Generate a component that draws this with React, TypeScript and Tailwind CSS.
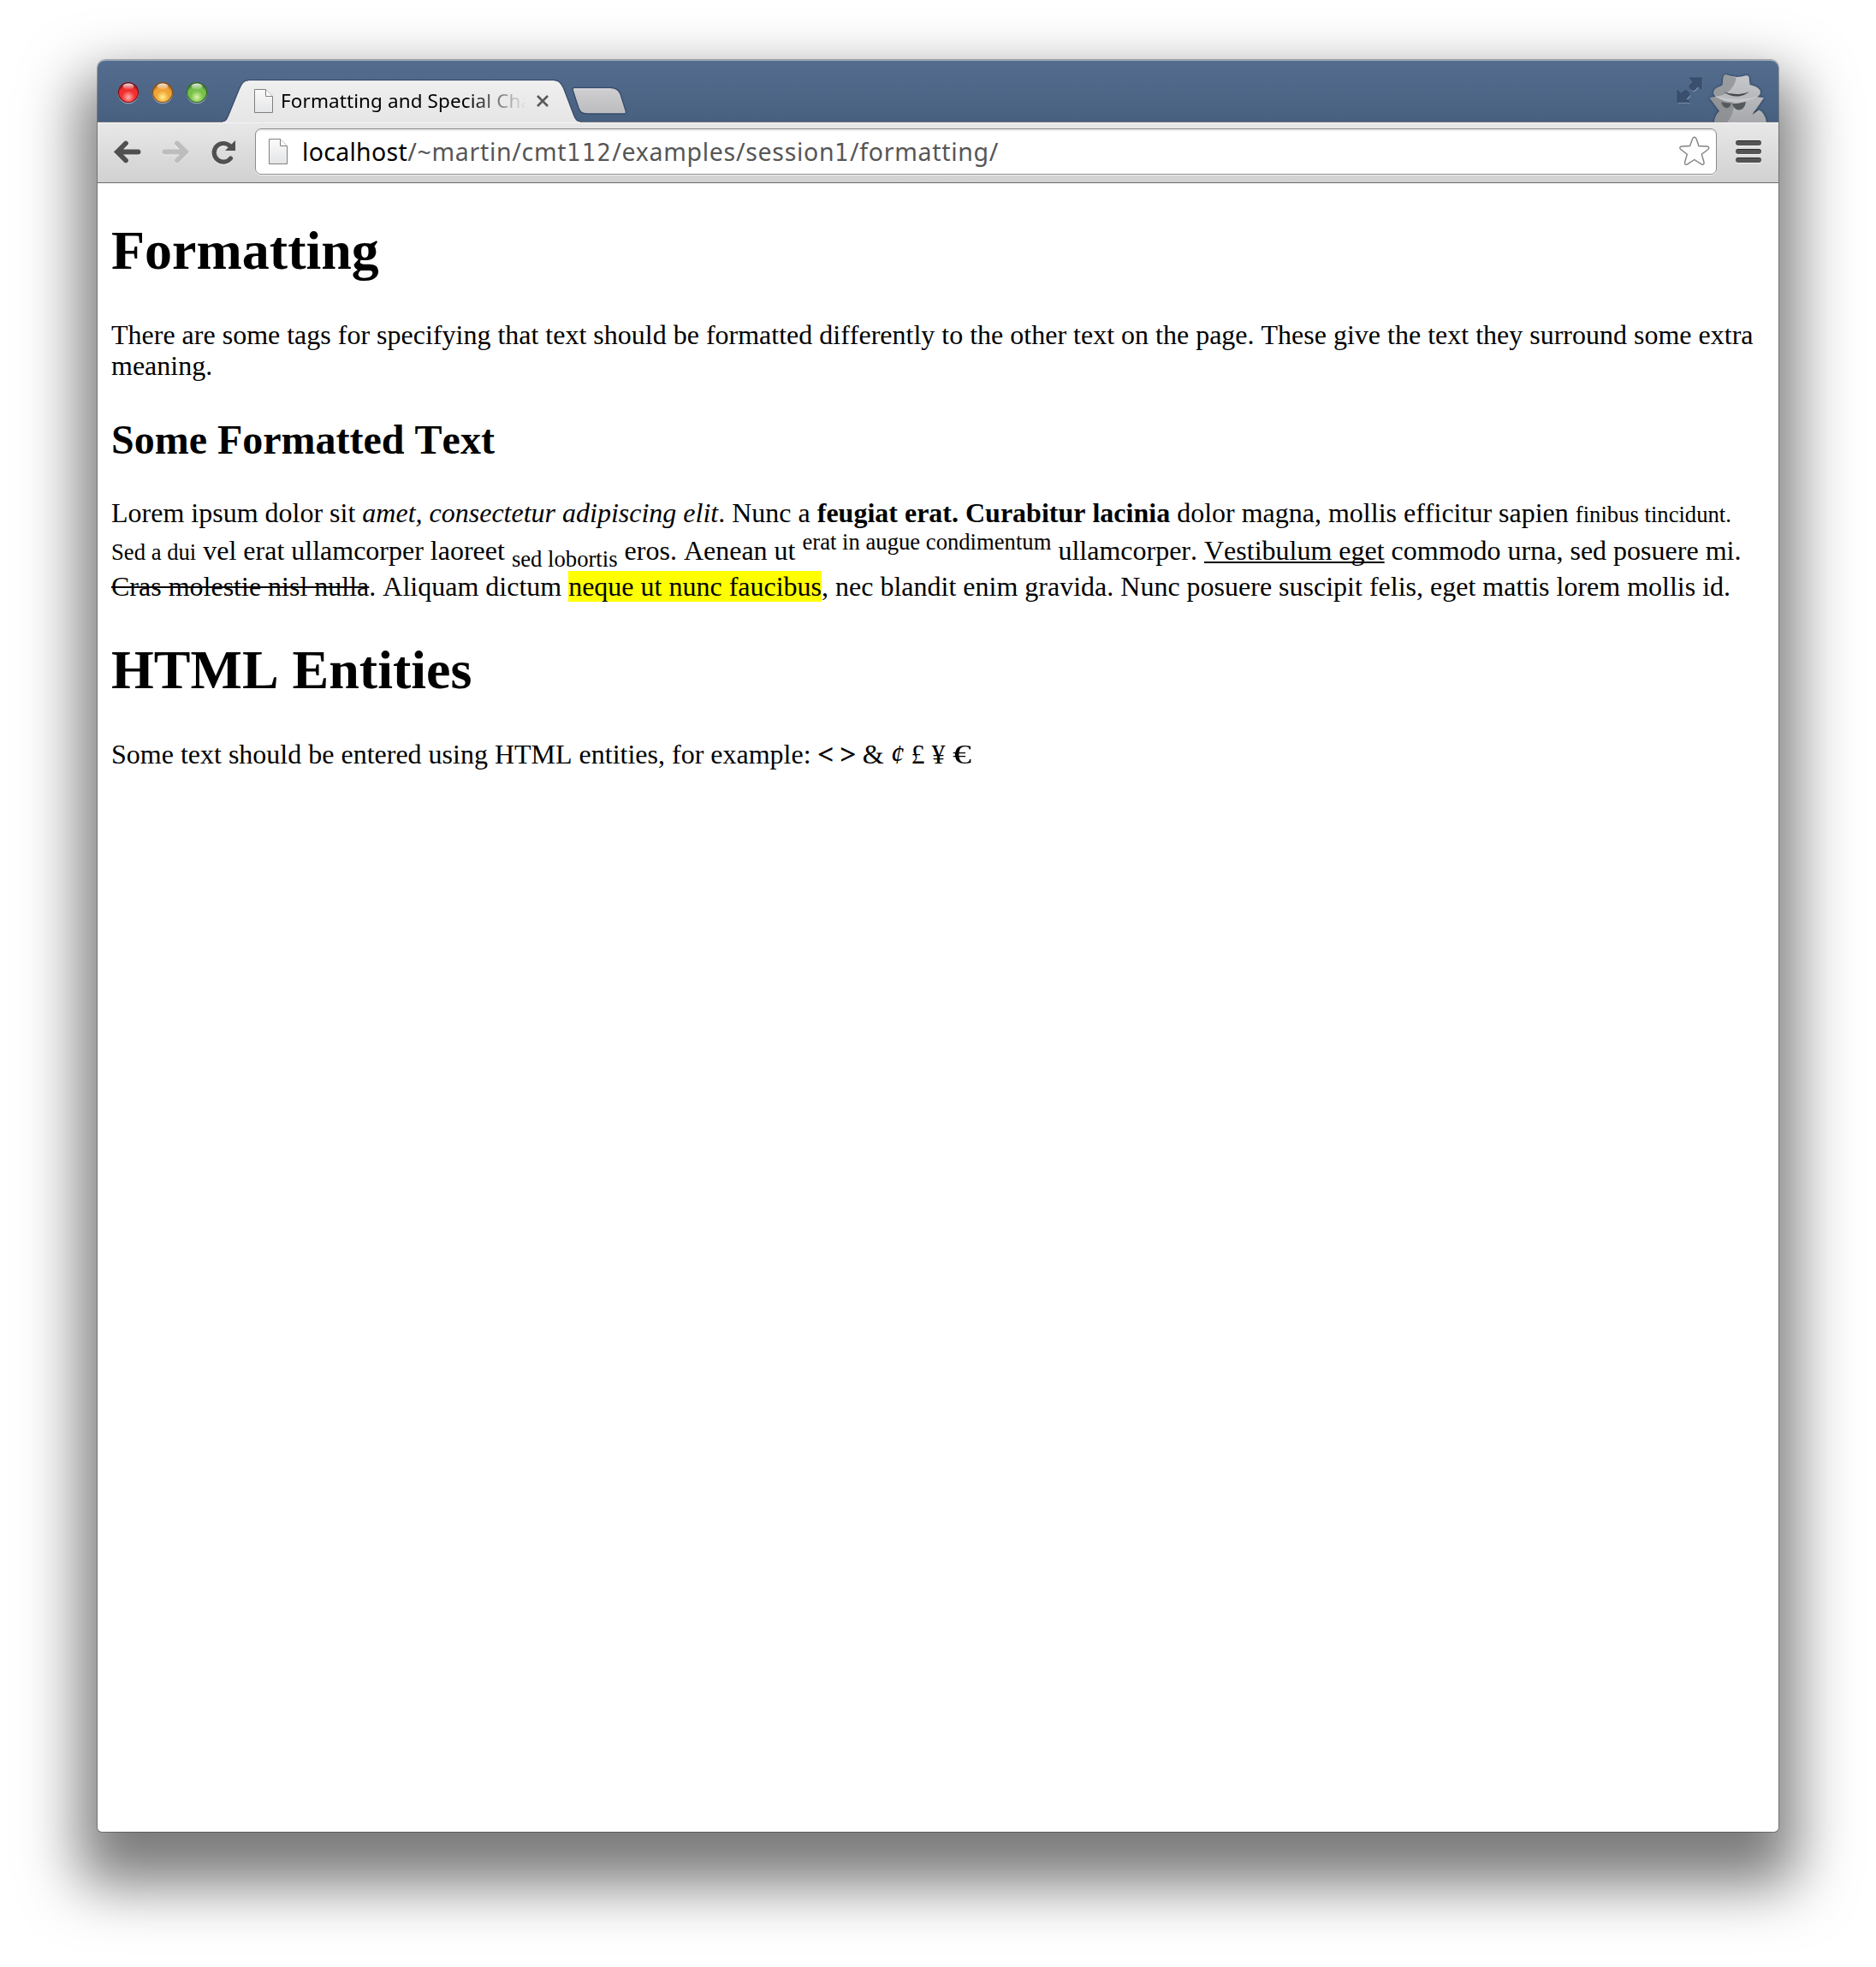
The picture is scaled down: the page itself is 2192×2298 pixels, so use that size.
import React from "react";

function Light({ dark, mid, glow, id }: { dark: string; mid: string; glow: string; id: string }) {
  return (
    <svg width="26" height="28" viewBox="0 0 26 28" className="block">
      <defs>
        <radialGradient id={id} cx="0.5" cy="0.74" r="0.72">
          <stop offset="0" stopColor={glow} />
          <stop offset="0.45" stopColor={mid} />
          <stop offset="0.68" stopColor={mid} />
          <stop offset="1" stopColor={dark} />
        </radialGradient>
        <linearGradient id={id + "s"} x1="0" y1="0" x2="0" y2="1">
          <stop offset="0" stopColor="#fff" stopOpacity="0.9" />
          <stop offset="1" stopColor="#fff" stopOpacity="0.05" />
        </linearGradient>
      </defs>
      <circle cx="13" cy="14.3" r="12" fill="#a9b9cf" opacity="0.75" />
      <circle cx="13" cy="13" r="11.5" fill={`url(#${id})`} stroke={dark} strokeWidth="1.1" />
      <ellipse cx="13" cy="6" rx="6.5" ry="3.4" fill={`url(#${id}s)`} />
    </svg>
  );
}

function PageIcon({ h }: { h: number }) {
  return (
    <svg width="22" height={h} viewBox={`0 0 22 ${h}`} className="block shrink-0">
      <defs>
        <linearGradient id={"pg" + h} x1="0" y1="0" x2="0" y2="1">
          <stop offset="0" stopColor="#fbfbfb" />
          <stop offset="1" stopColor="#e4e5e7" />
        </linearGradient>
      </defs>
      <path d={`M0.5 0.5H13.5L21.5 8.5V${h - 0.5}H0.5Z`} fill={`url(#pg${h})`} stroke="#808080" />
      <path d="M13.5 0.5V8.5H21.5" fill="#fff" stroke="#808080" />
    </svg>
  );
}

function TabShape() {
  return (
    <svg width="426" height="50" viewBox="256 93 426 50" className="absolute left-0 top-0">
      <defs>
        <linearGradient id="tab" x1="0" y1="0" x2="0" y2="1">
          <stop offset="0" stopColor="#efefef" />
          <stop offset="1" stopColor="#e6e6e6" />
        </linearGradient>
      </defs>
      <path
        d="M260 143V142C264 142 265 139 267 134.500L279.500 104C282.500 97 285 94 291 94H647C653 94 655.500 97 658.500 103L670.500 134.500C672.500 139.500 674 142 678 142V143Z"
        fill="url(#tab)"
      />
      <path
        d="M259 142C264 142 265 139 267 134.500L279.500 104C282.500 97 285 93.600 291 93.600H647C653 93.600 655.500 97 658.500 103L670.500 134.500C672.500 139.500 674 142 679 142"
        fill="none"
        stroke="#36486a"
        strokeWidth="1.200"
      />
      <path d="M290 95H648" stroke="#fafafa" />
    </svg>
  );
}

function Spy() {
  return (
    <svg width="74" height="60" viewBox="1994 83 74 60" className="block">
      <defs>
        <linearGradient id="coat" x1="0" y1="0" x2="0" y2="1">
          <stop offset="0" stopColor="#c6c8cb" />
          <stop offset="1" stopColor="#a6a8ab" />
        </linearGradient>
        <filter id="sh" x="-20%" y="-20%" width="140%" height="140%">
          <feDropShadow dx="0" dy="0" stdDeviation="1.8" floodColor="#16233a" floodOpacity="0.95" />
        </filter>
      </defs>
      <g filter="url(#sh)">
        <path
          d="M2003.300 143C2003.500 137 2006 133 2009.300 129.800L1997.700 114.300L2005 113C2001.500 110.500 2001.300 105.500 2006 102.800L2012.700 99.800L2014 89Q2014.500 87 2017 87.500Q2028 91.500 2037 89Q2042.500 87 2043.500 90L2044.500 99C2051 100.500 2057 103.500 2057 107.700C2057 110.500 2055 112 2053 113.200L2061 114.300L2048 133L2055 128.500Q2062 131 2064 143Z"
          fill="url(#coat)"
        />
      </g>
      <path d="M2012.700 99.800L2014 89Q2014.500 87 2017 87.500Q2023 90 2028.500 90.500C2028 97 2024 104 2016.500 109.500Q2011 112 2005 112.500C2001.500 110.500 2001.300 105.500 2006 102.800Z" fill="#8e9194" opacity="0.8" />
      <path d="M1997.700 114.300L2005 113.300Q2014 119 2025 119.500C2027 128 2023 137 2018 143H2003.300C2003.500 137 2006 133 2009.300 129.800Z" fill="#85888c" opacity="0.75" />
      <path d="M2003.500 111.500Q2013 119.500 2029 119.500Q2045 119 2054 112Q2042 116 2028.500 115.500Q2014 115.500 2003.500 111.500Z" fill="#cccdd0" opacity="0.7" />
      <path d="M2014 107.200Q2028 113 2044.300 107.200Q2029 118 2014 107.200Z" fill="#45484c" />
      <path d="M2011 119Q2018 120.500 2022.500 120.500Q2022 126.200 2017.500 126.200Q2012.500 125.500 2011 119Z" fill="#55585c" />
      <path d="M2024 121Q2032 121 2040 118.800Q2038.500 128.500 2031.500 128.500Q2025.500 127.500 2024 121Z" fill="#55585c" />
      <path d="M2047.500 134L2055 128.500L2050 129.500Z" fill="#3f4a5c" />
    </svg>
  );
}

function Expand() {
  return (
    <svg width="32" height="32" viewBox="1959 90 32 32" className="block">
      <g fill="#d2dcea" opacity="0.6" transform="translate(0.6 0.9)">
        <path d="M1974 91H1988.500V105.500L1984 101.500L1980.500 105Q1978.500 106.500 1976.500 105L1974.500 103Q1973 101 1975 99L1978 96Z" />
        <path d="M1960 105.500V119.500H1974.500L1970.500 115.500L1973.500 112.500Q1975 110.500 1973.500 108.500L1971.500 106.500Q1969.500 105 1967.500 106.500L1964.500 109.500Z" />
      </g>
      <g fill="#3a4e6d" stroke="#2b4060" strokeWidth="0.600">
        <path d="M1974 91H1988.500V105.500L1984 101.500L1980.500 105Q1978.500 106.500 1976.500 105L1974.500 103Q1973 101 1975 99L1978 96Z" />
        <path d="M1960 105.500V119.500H1974.500L1970.500 115.500L1973.500 112.500Q1975 110.500 1973.500 108.500L1971.500 106.500Q1969.500 105 1967.500 106.500L1964.500 109.500Z" />
      </g>
    </svg>
  );
}

function Arrow({ color, flip }: { color: string; flip?: boolean }) {
  return (
    <svg width="34" height="30" viewBox="0 0 34 30" className={flip ? "block -scale-x-100" : "block"}>
      <g fill="none" stroke="#fff" strokeOpacity="0.5" strokeWidth="5.800" strokeLinecap="round" transform="translate(0 1.200)">
        <path d="M6 14.500H29.500M15 5L5 14.500L15 24" />
      </g>
      <g fill="none" stroke={color} strokeWidth="5.800" strokeLinecap="round" strokeLinejoin="miter">
        <path d="M6 14.500H29.500M15 4.500L5 14.500L15 24.500" />
      </g>
    </svg>
  );
}

function Reload() {
  return (
    <svg width="30" height="30" viewBox="247 163 30 30" className="block">
      <path d="M269.500 185A10.800 10.800 0 1 1 268.500 170.500" transform="translate(0 1.200)" fill="none" stroke="#fff" strokeOpacity="0.5" strokeWidth="5" strokeLinecap="round" />
      <path d="M269.500 185A10.800 10.800 0 1 1 268.500 170.500" fill="none" stroke="#505050" strokeWidth="5.200" strokeLinecap="round" />
      <path d="M275 164V176H263Z" fill="#505050" />
    </svg>
  );
}

function Digits({ children }: { children: string }) {
  return (
    <span className="font-['DejaVu_Sans_Condensed','DejaVu_Sans',sans-serif] tracking-[1.300px] [font-stretch:condensed]">{children}</span>
  );
}

const bar = "h-[6px] w-[30px] rounded-[3px] border-t border-[#2e2e2e] bg-[#545454] shadow-[0_1px_0_#f4f4f4]";

export default function App() {
  return (
    <div className="h-[2298px] w-[2192px] overflow-hidden bg-white pl-[114px] pt-[70px]">
      <div className="flex h-[2070px] w-[1964px] flex-col rounded-t-[9px] rounded-b-[5px] bg-white shadow-[0_0_0_1px_rgba(0,0,0,0.28),0_41px_68px_21px_rgba(0,0,0,0.52)]">
        <div className="flex h-[73px] shrink-0 rounded-t-[9px] border-t border-[#9fb0c4] bg-linear-to-b from-[#546d8e] to-[#486080] pl-[23px] shadow-[inset_0_-1px_0_#6a6f78]">
          <div className="flex gap-[14px] pt-[24px]">
            <Light id="lr" dark="#7d1016" mid="#f2302f" glow="#ffb3ae" />
            <Light id="ly" dark="#8a4d10" mid="#f0a436" glow="#fff08c" />
            <Light id="lg" dark="#336a1c" mid="#78c04c" glow="#d9f7a4" />
          </div>
          <div className="relative ml-[13px] mt-[22px] flex h-[50px] w-[426px] items-start">
            <TabShape />
            <div className="relative flex w-full items-start pl-[41px]">
              <div className="pt-[11px]">
                <PageIcon h={28} />
              </div>
              <div className="ml-[9px] mt-[8px] w-[287px] whitespace-nowrap bg-linear-to-r from-black from-[76%] to-transparent to-[100%] bg-clip-text font-['Noto_Sans',sans-serif] text-[22.500px] leading-[34px] tracking-[0.100px] text-transparent">
                Formatting and Special Cha
              </div>
              <svg width="16" height="16" viewBox="0 0 16 16" className="ml-[11px] mt-[17px] block">
                <path d="M2 2L14 14M14 2L2 14" stroke="#5a5a5a" strokeWidth="2.600" />
              </svg>
            </div>
          </div>
          <svg width="68" height="34" viewBox="667 101 68 34" className="-ml-[15px] mt-[30px] block">
            <defs>
              <linearGradient id="nt" x1="0" y1="0" x2="0" y2="1">
                <stop offset="0" stopColor="#cfcfd1" />
                <stop offset="1" stopColor="#bcbcbf" />
              </linearGradient>
            </defs>
            <path
              d="M671 102.500H714C720 102.500 723 105 725 110L731 129C732 132 731.500 133 729 133H686C680 133 678 131 676 126L669.500 106C668.800 103.500 669 102.500 671 102.500Z"
              fill="url(#nt)"
              stroke="#364a6b"
              strokeWidth="1.300"
            />
            <path d="M671 104H714" stroke="#e2e2e4" />
          </svg>
          <div className="ml-auto flex pr-[10px]">
            <div className="pt-[19px]">
              <Expand />
            </div>
            <div className="ml-[3px] pt-[12px]">
              <Spy />
            </div>
          </div>
        </div>

        <div className="flex h-[71px] shrink-0 items-start border-b border-[#6a6a6a] bg-linear-to-b from-[#e8e8e8] to-[#d1d1d1] pl-[18px] pt-[7px] shadow-[inset_0_1px_0_#f4f4f4]">
          <div className="flex pt-[13px]">
            <Arrow color="#505050" />
            <div className="ml-[22px]">
              <Arrow color="#bdbdbd" flip />
            </div>
            <div className="ml-[25px]">
              <Reload />
            </div>
          </div>
          <div className="ml-[21px] flex h-[54px] w-[1708px] items-start rounded-[7px] border border-[#8c8c8c] bg-white pl-[15px] shadow-[0_1px_0_#f0f0f0,inset_0_2px_1px_#ececec]">
            <div className="mt-[11px]">
              <PageIcon h={30} />
            </div>
            <div className="ml-[17px] mt-[5px] whitespace-nowrap font-['Noto_Sans',sans-serif] text-[28.500px] leading-[42px] tracking-[0.700px] text-[#565656]">
              <span className="tracking-[0.300px] text-black">localhost</span>/~martin/cmt<Digits>112</Digits>/examples/session<Digits>1</Digits>/formatting/
            </div>
            <svg width="38" height="38" viewBox="1961 158 38 38" className="ml-auto mr-[6px] mt-[7px] block">
              <path
                d="M1979.800 160.300C1981 160.300 1981.600 161 1982 162L1985 170.500L1994.500 171C1997 171.200 1997.500 173 1995.800 174.500L1988.300 180.300L1991 189.500C1991.500 192 1990 193 1988 191.800L1979.800 186.500L1971.600 191.800C1969.600 193 1968.100 192 1968.600 189.500L1971.300 180.300L1963.800 174.500C1962.100 173 1962.600 171.200 1965.100 171L1974.600 170.500L1977.600 162C1978 161 1978.600 160.300 1979.800 160.300Z"
                fill="#fff"
                stroke="#828282"
                strokeWidth="1.400"
              />
            </svg>
          </div>
          <div className="ml-[22px] flex flex-col gap-[4px] pt-[14px]">
            <div className={bar} />
            <div className={bar} />
            <div className={bar} />
          </div>
        </div>

        <div className="whitespace-nowrap pl-[16px] font-['Liberation_Serif',serif] text-[32px] leading-[36px] text-black [font-kerning:none]">
          <h1 className="mt-[42px] text-[64px] font-bold leading-[74px]">Formatting</h1>
          <p className="mt-[43px]">
            There are some tags for specifying that text should be formatted differently to the other text on the page. These give the text they surround some extra
            <br />
            meaning.
          </p>
          <h2 className="mt-[41px] text-[48px] font-bold leading-[56px]">Some Formatted Text</h2>
          <p className="mt-[39px]">
            <span className="block h-[44px]">
              Lorem ipsum dolor sit <em>amet, consectetur adipiscing elit</em>. Nunc a <strong>feugiat erat. Curabitur lacinia</strong> dolor magna, mollis efficitur sapien{" "}
              <small className="text-[26.667px]">finibus tincidunt.</small>
            </span>
            <span className="block h-[42px]">
              <small className="text-[26.667px]">Sed a dui</small> vel erat ullamcorper laoreet{" "}
              <sub className="bottom-auto top-[8px] text-[26.667px] leading-none">sed lobortis</sub> eros. Aenean ut{" "}
              <sup className="-top-[12px] text-[26.667px] leading-none">erat in augue condimentum</sup> ullamcorper.{" "}
              <u className="decoration-2 underline-offset-[2px] [text-decoration-skip-ink:none]">Vestibulum eget</u> commodo urna, sed posuere mi.
            </span>
            <span className="block h-[36px]">
              <s className="decoration-2">Cras molestie nisl nulla</s>. Aliquam dictum <mark className="bg-[#ffff00] text-black">neque ut nunc faucibus</mark>, nec blandit enim gravida. Nunc posuere suscipit felis, eget mattis lorem mollis id.
            </span>
          </p>
          <h1 className="mt-[43px] text-[64px] font-bold leading-[74px]">HTML Entities</h1>
          <p className="mt-[43px]">
            Some text should be entered using HTML entities, for example: <span className="[-webkit-text-stroke:0.900px_black]">&lt; &gt;</span> &amp;{" "}
            <i>¢</i> £ ¥ <span className="inline-block origin-left scale-x-[1.38]">€</span>
          </p>
        </div>
      </div>
    </div>
  );
}
